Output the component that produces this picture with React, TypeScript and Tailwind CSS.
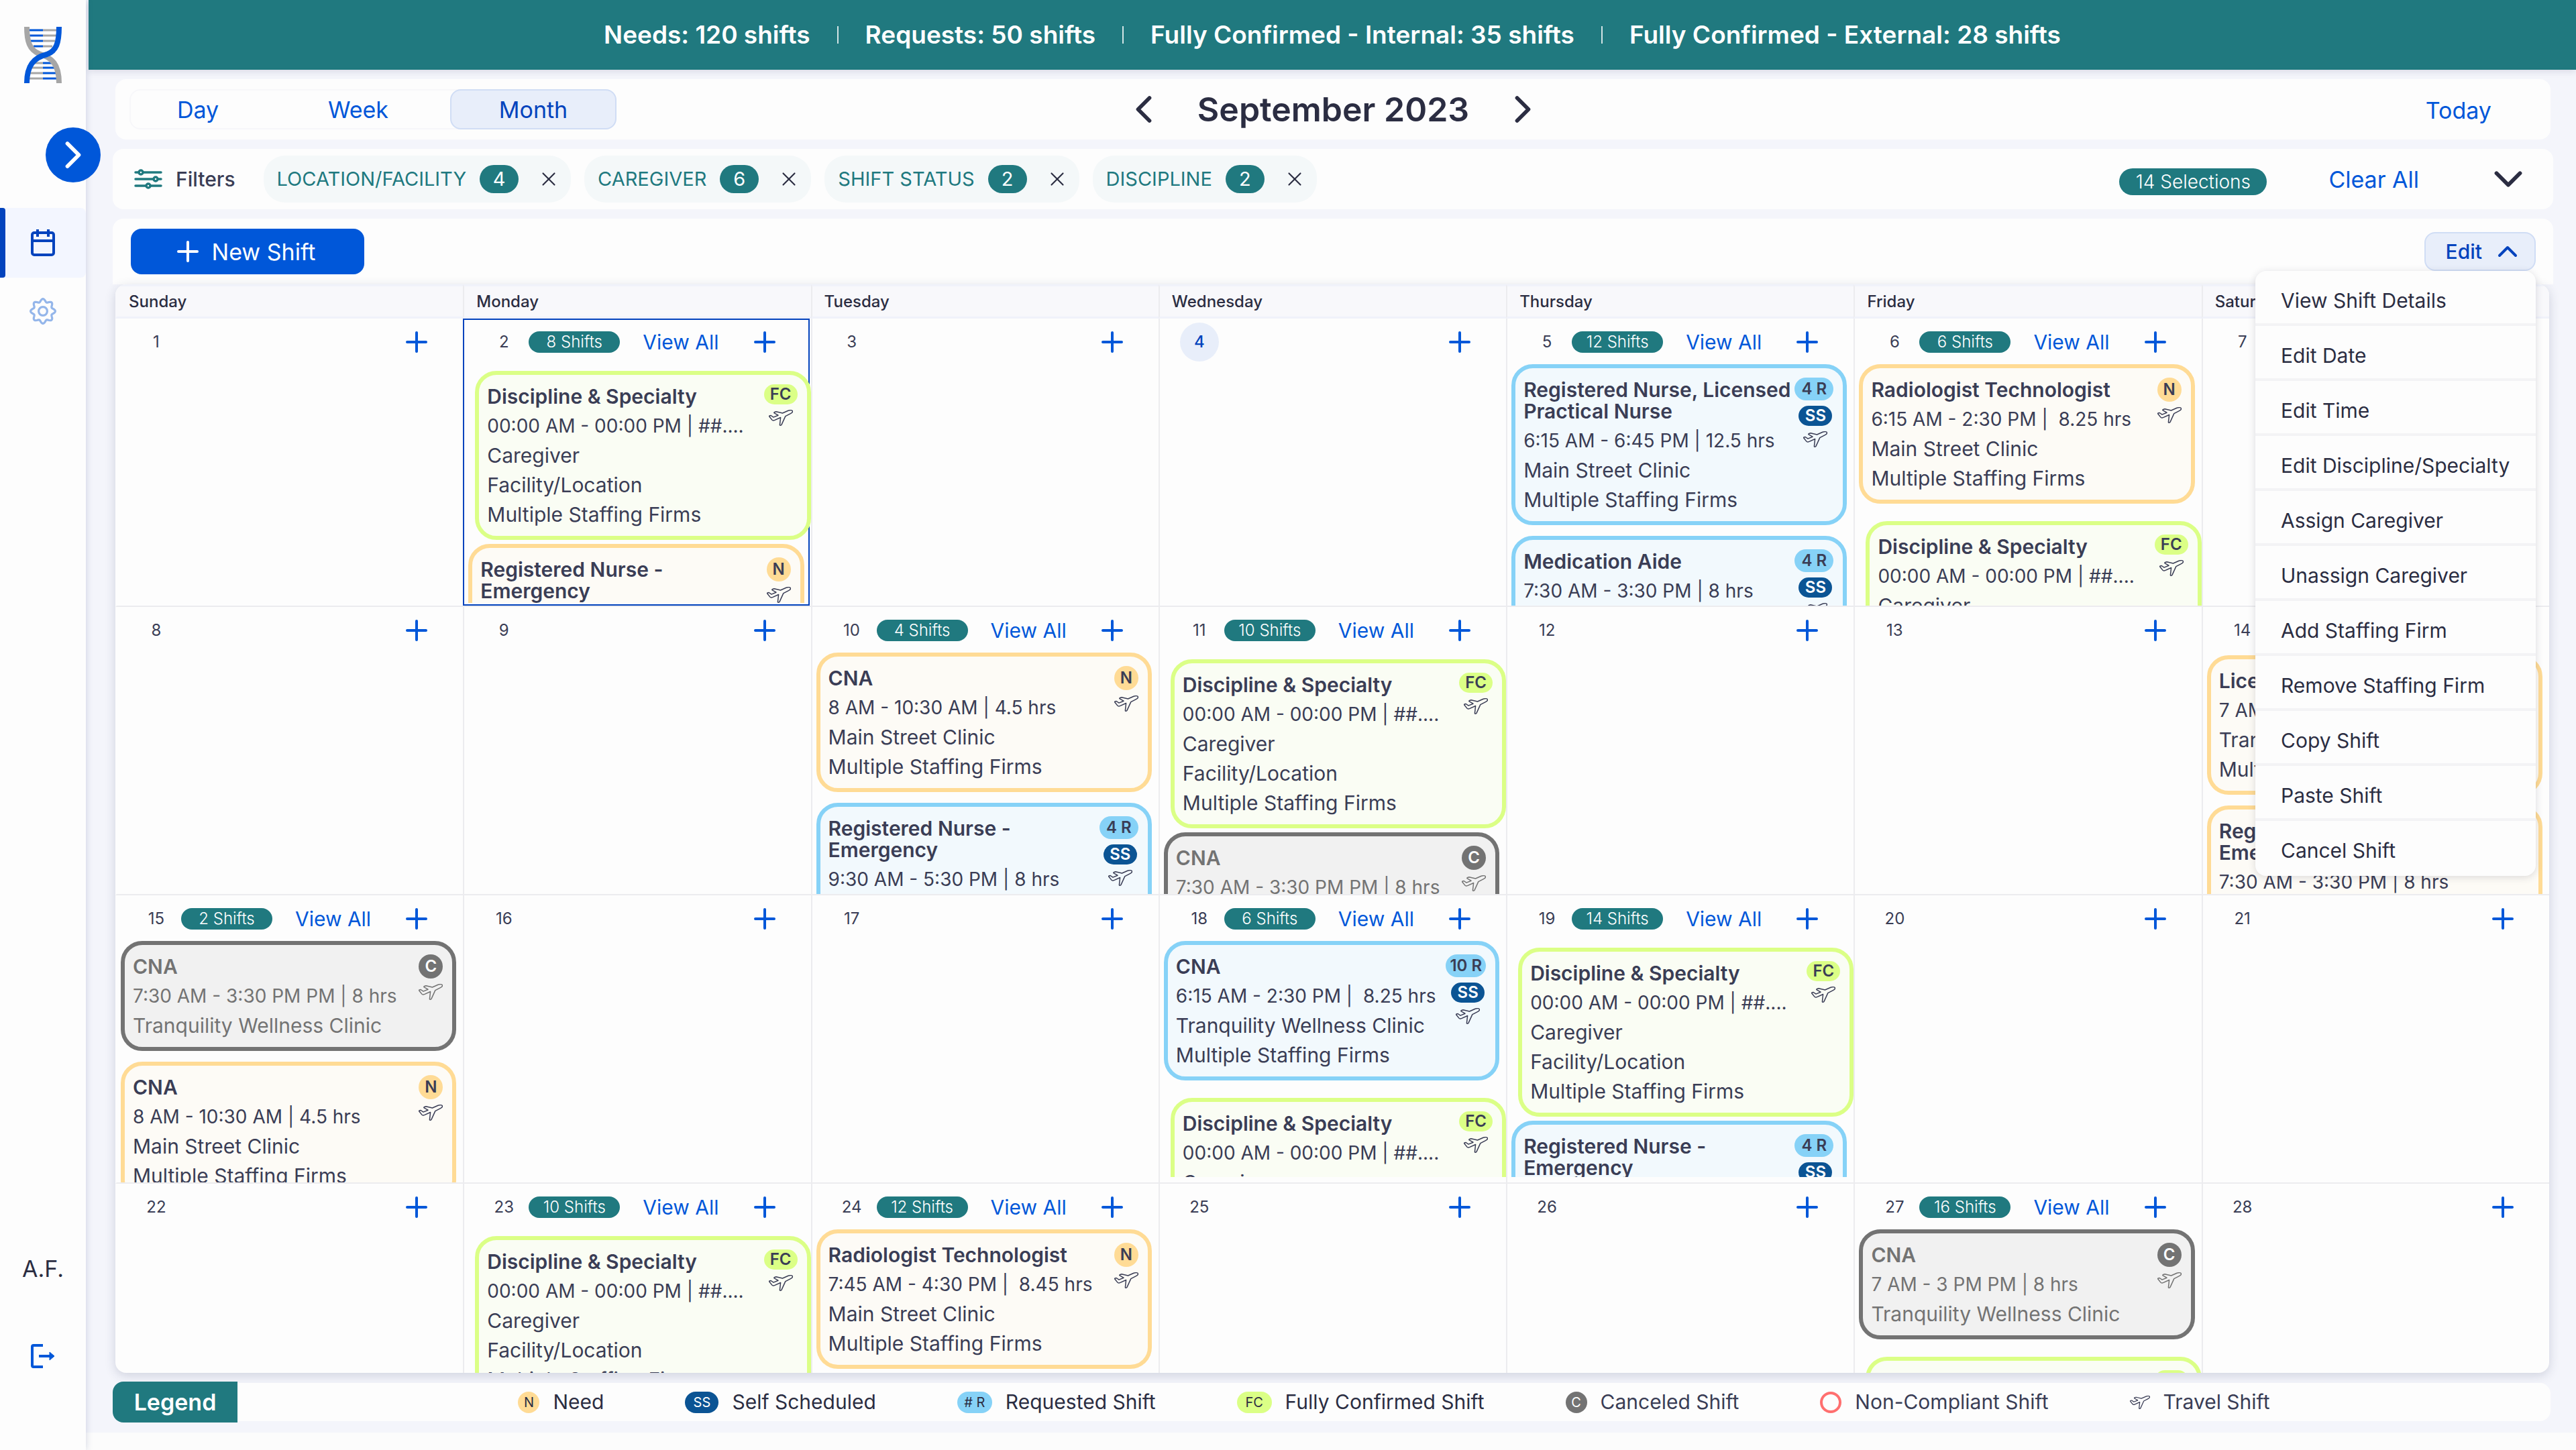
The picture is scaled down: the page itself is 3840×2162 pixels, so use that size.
import { ChevronDown, ChevronLeft, ChevronRight, ChevronUp, Plus, X } from "lucide-react";
import clsx from "clsx";

type ShiftStatus = "need" | "requested" | "confirmed" | "canceled";

interface Shift {
	status: ShiftStatus;
	title: string[];
	time: string;
	lines: string[];
	requests?: number;
}

interface Day {
	date: number;
	count?: number;
	selected?: boolean;
	today?: boolean;
	listStyles?: string;
	shifts?: Shift[];
}

const WEEKDAYS = ["Sunday", "Monday", "Tuesday", "Wednesday", "Thursday", "Friday", "Saturday"];

const FILTERS = [
	{ label: "LOCATION/FACILITY", count: 4 },
	{ label: "CAREGIVER", count: 6 },
	{ label: "SHIFT STATUS", count: 2 },
	{ label: "DISCIPLINE", count: 2 },
];

const MENU = [
	"View Shift Details",
	"Edit Date",
	"Edit Time",
	"Edit Discipline/Specialty",
	"Assign Caregiver",
	"Unassign Caregiver",
	"Add Staffing Firm",
	"Remove Staffing Firm",
	"Copy Shift",
	"Paste Shift",
	"Cancel Shift",
];

const TOTALS = [
	"Needs: 120 shifts",
	"Requests: 50 shifts",
	"Fully Confirmed - Internal: 35 shifts",
	"Fully Confirmed - External: 28 shifts",
];

const FIRMS = "Multiple Staffing Firms";
const MAIN_STREET = "Main Street Clinic";
const TRANQUILITY = "Tranquility Wellness Clinic";

const confirmed: Shift = {
	status: "confirmed",
	title: ["Discipline & Specialty"],
	time: "00:00 AM - 00:00 PM | ##....",
	lines: ["Caregiver", "Facility/Location", FIRMS],
};

const WEEKS: Day[][] = [
	[
		{ date: 1 },
		{
			date: 2,
			count: 8,
			selected: true,
			listStyles: "mb-1",
			shifts: [
				confirmed,
				{
					status: "need",
					title: ["Registered Nurse -", "Emergency"],
					time: "7:30 AM - 3:30 PM | 8 hrs",
					lines: [MAIN_STREET, FIRMS],
				},
			],
		},
		{ date: 3 },
		{ date: 4, today: true },
		{
			date: 5,
			count: 12,
			shifts: [
				{
					status: "requested",
					requests: 4,
					title: ["Registered Nurse, Licensed", "Practical Nurse"],
					time: "6:15 AM - 6:45 PM | 12.5 hrs",
					lines: [MAIN_STREET, FIRMS],
				},
				{
					status: "requested",
					requests: 4,
					title: ["Medication Aide"],
					time: "7:30 AM - 3:30 PM | 8 hrs",
					lines: [MAIN_STREET, FIRMS],
				},
			],
		},
		{
			date: 6,
			count: 6,
			shifts: [
				{
					status: "need",
					title: ["Radiologist Technologist"],
					time: "6:15 AM - 2:30 PM |  8.25 hrs",
					lines: [MAIN_STREET, FIRMS],
				},
				confirmed,
			],
		},
		{ date: 7 },
	],
	[
		{ date: 8 },
		{ date: 9 },
		{
			date: 10,
			count: 4,
			shifts: [
				{
					status: "need",
					title: ["CNA"],
					time: "8 AM - 10:30 AM | 4.5 hrs",
					lines: [MAIN_STREET, FIRMS],
				},
				{
					status: "requested",
					requests: 4,
					title: ["Registered Nurse -", "Emergency"],
					time: "9:30 AM - 5:30 PM | 8 hrs",
					lines: [MAIN_STREET, FIRMS],
				},
			],
		},
		{
			date: 11,
			count: 10,
			shifts: [
				confirmed,
				{
					status: "canceled",
					title: ["CNA"],
					time: "7:30 AM - 3:30 PM PM | 8 hrs",
					lines: [TRANQUILITY],
				},
			],
		},
		{ date: 12 },
		{ date: 13 },
		{
			date: 14,
			listStyles: "mt-1",
			shifts: [
				{
					status: "need",
					title: ["Licensed Practical Nurse"],
					time: "7 AM - 3 PM | 8 hrs",
					lines: [TRANQUILITY, FIRMS],
				},
				{
					status: "need",
					title: ["Registered Nurse -", "Emergency"],
					time: "7:30 AM - 3:30 PM | 8 hrs",
					lines: [MAIN_STREET, FIRMS],
				},
			],
		},
	],
	[
		{
			date: 15,
			count: 2,
			shifts: [
				{
					status: "canceled",
					title: ["CNA"],
					time: "7:30 AM - 3:30 PM PM | 8 hrs",
					lines: [TRANQUILITY],
				},
				{
					status: "need",
					title: ["CNA"],
					time: "8 AM - 10:30 AM | 4.5 hrs",
					lines: [MAIN_STREET, FIRMS],
				},
			],
		},
		{ date: 16 },
		{ date: 17 },
		{
			date: 18,
			count: 6,
			listStyles: "mb-2",
			shifts: [
				{
					status: "requested",
					requests: 10,
					title: ["CNA"],
					time: "6:15 AM - 2:30 PM |  8.25 hrs",
					lines: [TRANQUILITY, FIRMS],
				},
				confirmed,
			],
		},
		{
			date: 19,
			count: 14,
			listStyles: "mb-2",
			shifts: [
				confirmed,
				{
					status: "requested",
					requests: 4,
					title: ["Registered Nurse -", "Emergency"],
					time: "9:30 AM - 5:30 PM | 8 hrs",
					lines: [MAIN_STREET, FIRMS],
				},
			],
		},
		{ date: 20 },
		{ date: 21 },
	],
	[
		{ date: 22 },
		{ date: 23, count: 10, shifts: [confirmed] },
		{
			date: 24,
			count: 12,
			shifts: [
				{
					status: "need",
					title: ["Radiologist Technologist"],
					time: "7:45 AM - 4:30 PM |  8.45 hrs",
					lines: [MAIN_STREET, FIRMS],
				},
			],
		},
		{ date: 25 },
		{ date: 26 },
		{
			date: 27,
			count: 16,
			shifts: [
				{
					status: "canceled",
					title: ["CNA"],
					time: "7 AM - 3 PM PM | 8 hrs",
					lines: [TRANQUILITY],
				},
				confirmed,
			],
		},
		{ date: 28 },
	],
];

const CARD_STYLES: Record<ShiftStatus, string> = {
	need: "border-[#ffdb95] bg-[#fdfbf6] text-[#3a3d55]",
	requested: "border-[#86d2f7] bg-[#f2f9fd] text-[#3a3d55]",
	// confirmed cards sit a step to the right and below the others
	confirmed: "mt-[10px] -mb-[10px] ml-[10px] -mr-[10px] border-[#dbff86] bg-[#fafdf4] text-[#3a3d55]",
	canceled: "border-[#737373] bg-[#f1f1f1] text-[#737373]",
};

const PlaneIcon: React.FC<{ className: string }> = ({ className }) => (
	<svg viewBox="0 0 36 24" fill="none" stroke="currentColor" className={className} aria-hidden="true">
		<path
			d="M20.5 5 29 1.3C31.5.4 34.6.5 35.3 1.6c.6 1.2-.8 3-2.8 4L24.8 9.6 19 22.4c-.5.9-2.8 1.2-2.6.3l1.2-11.2L9 15.4c-1.7.7-3.4.6-4.1-.3L.8 10c-.4-.7.1-1.2.9-1.3l1.5-.2L7 11.1l7-2.9-5.8-3.4c-.8-.6-.2-1 .5-1.3l2.3-.8z"
			strokeWidth="1.5"
			strokeLinejoin="round"
		/>
	</svg>
);

const Logo = () => (
	<svg viewBox="0 0 56 84" fill="none" className="h-[84px] w-14" role="img" aria-label="Logo">
		<g strokeWidth="3">
			<path d="M8 5h20M8 13h20M10 21h18M14 29h14M28 54h14M28 61h17M28 69h19M28 77h20" stroke="#0057d9" />
			<path d="M28 5h20M28 13h20M28 21h18M28 29h14M14 54h14M11 61h17M9 69h19M8 77h20" stroke="#a6a6a6" />
		</g>
		<path d="M4 0c0 22 4 34 18 40 20 6 30 16 30 44" stroke="#a6a6a6" strokeWidth="8" />
		<path d="M52 0c0 24-4 36-18 41C14 46 4 58 4 84" stroke="#0057d9" strokeWidth="8" />
	</svg>
);

const CalendarIcon = () => (
	<svg viewBox="0 0 36 40" fill="none" stroke="currentColor" strokeWidth="4" className="h-10 w-9" aria-hidden="true">
		<rect x="2" y="5" width="32" height="33" rx="3" />
		<path d="M2 17h32M10 0v11M26 0v11" />
	</svg>
);

// eight soft teeth around the hub
const GEAR_POINTS = Array.from({ length: 96 }, (_, i) => {
	const angle = (i / 96) * Math.PI * 2;
	const radius = 16.2 + 2.2 * Math.cos(8 * angle);
	return `${(20 + radius * Math.cos(angle)).toFixed(2)},${(20 + radius * Math.sin(angle)).toFixed(2)}`;
}).join(" ");

const GearIcon = () => (
	<svg viewBox="0 0 40 40" fill="none" stroke="currentColor" strokeWidth="3.2" className="size-10" aria-hidden="true">
		<polygon points={GEAR_POINTS} strokeLinejoin="round" />
		<circle cx="20" cy="20" r="6.4" />
	</svg>
);

const LogoutIcon = () => (
	<svg viewBox="0 0 36 36" fill="none" stroke="currentColor" strokeWidth="4" className="size-9" aria-hidden="true">
		<path d="M18 2H4a2 2 0 0 0-2 2v28a2 2 0 0 0 2 2h14M12 18h18" />
		<path d="M28 12v12l7-6z" fill="currentColor" strokeWidth="1" />
	</svg>
);

const SlidersIcon = () => (
	<svg
		viewBox="0 0 42 30"
		fill="none"
		stroke="currentColor"
		strokeWidth="3.5"
		strokeLinecap="round"
		className="h-[30px] w-[42px] text-[#20797f]"
		aria-hidden="true"
	>
		<path d="M2 5h4M14 5h26M2 15h26M36 15h4M2 25h15M25 25h15" />
		<circle cx="10" cy="5" r="3" />
		<circle cx="32" cy="15" r="3" />
		<circle cx="21" cy="25" r="3" />
	</svg>
);

const StatusBadges: React.FC<{ shift: Shift }> = ({ shift }) => {
	const { status, requests } = shift;
	return (
		<div className="absolute top-3.5 right-3.5 flex flex-col items-end gap-2 text-2xl leading-none font-semibold">
			{status === "requested" && (
				<span className="flex h-[34px] min-w-[58px] items-center justify-center rounded-full bg-[#86d2f7] px-1.5 whitespace-nowrap">
					{requests} R
				</span>
			)}
			<div className={clsx("flex flex-col items-center gap-2", status === "requested" && "mr-0.5")}>
				{status === "requested" && (
					<span className="flex h-[30px] w-[50px] items-center justify-center rounded-full bg-[#0b5494] text-white">
						SS
					</span>
				)}
				{status === "confirmed" && (
					<span className="flex h-[30px] w-[50px] items-center justify-center rounded-full bg-[#dbff86]">
						FC
					</span>
				)}
				{status === "need" && (
					<span className="flex size-9 items-center justify-center rounded-full bg-[#ffdb95]">N</span>
				)}
				{status === "canceled" && (
					<span className="flex size-9 items-center justify-center rounded-full bg-[#737373] text-white">
						C
					</span>
				)}
				<PlaneIcon className="h-6 w-9" />
			</div>
		</div>
	);
};

const ShiftCard: React.FC<{ shift: Shift }> = ({ shift }) => (
	<article
		className={clsx(
			"relative flex shrink-0 flex-col gap-3 rounded-[32px] border-6 py-4 pl-3 text-[30px] leading-8 whitespace-pre",
			CARD_STYLES[shift.status]
		)}
	>
		<h3 className="font-semibold">
			{shift.title.map((line) => (
				<span key={line} className="block">
					{line}
				</span>
			))}
		</h3>
		<p className="text-[28px] leading-8">{shift.time}</p>
		{shift.lines.map((line) => (
			<p key={line}>{line}</p>
		))}
		<StatusBadges shift={shift} />
	</article>
);

const DayCell: React.FC<{ day: Day; last: boolean }> = ({ day, last }) => (
	<td
		className={clsx(
			"relative border-l-2 border-[#ececef] p-0 align-top first:border-l-transparent",
			!last && "border-b-2"
		)}
	>
		{day.selected && <div className="absolute inset-0 -left-0.5 mr-0.5 border-2 border-[#0343bd]" />}
		<div className={clsx("relative flex flex-col", last ? "h-[282px]" : "h-[428px]")}>
			<div className="flex h-[68px] shrink-0 items-center pt-0.5 pl-[30px]">
				<span
					className={clsx(
						"flex size-[58px] items-center justify-center rounded-full text-2xl",
						day.today ? "bg-[#e8eefa] font-medium text-[#0343bd]" : "text-[#3a3d55]"
					)}
				>
					{day.date}
				</span>
				{day.count && (
					<>
						<span className="ml-2 flex h-8 w-[136px] items-center justify-center rounded-full bg-[#20797f] text-2xl font-light text-white">
							{day.count} Shifts
						</span>
						<a href="#" className="ml-[34px] text-[30px] whitespace-nowrap text-[#0057d9]">
							View All
						</a>
					</>
				)}
				<button type="button" aria-label="Add shift" className="mr-[45px] ml-auto text-[#0057d9]">
					<Plus className="size-12" strokeWidth={2} />
				</button>
			</div>
			{day.shifts && (
				<div
					className={clsx(
						"flex min-h-0 flex-1 flex-col gap-4 overflow-hidden pr-2.5 pl-1.5",
						day.listStyles
					)}
				>
					{day.shifts.map((shift, i) => (
						<ShiftCard key={i} shift={shift} />
					))}
				</div>
			)}
		</div>
	</td>
);

const Sidebar = () => (
	<aside className="relative z-10 flex w-32 shrink-0 flex-col items-center bg-[#fdfdfd] pt-10 shadow-[0_0_10px_rgba(40,60,120,0.2)]">
		<Logo />
		<button
			type="button"
			aria-label="Expand menu"
			className="absolute top-[190px] left-[68px] flex size-[82px] items-center justify-center rounded-full bg-[#0057d9] text-white"
		>
			<ChevronRight className="size-[68px]" strokeWidth={2} />
		</button>
		<nav className="mt-[186px] flex w-full flex-col">
			<a
				href="#"
				aria-label="Calendar"
				className="relative flex h-[104px] items-center justify-center rounded-r-lg bg-[#f3f6ff] text-[#0343bd]"
			>
				<span className="absolute inset-y-0 left-0 w-2 rounded-r bg-[#0343bd]" />
				<CalendarIcon />
			</a>
			<a href="#" aria-label="Settings" className="flex h-[100px] items-center justify-center text-[#94b6ea]">
				<GearIcon />
			</a>
		</nav>
		<div className="mt-auto flex flex-col items-center gap-[92px] pb-[122px]">
			<span className="text-[34px] leading-10 text-[#2b2d42]">A.F.</span>
			<button type="button" aria-label="Log out" className="text-[#0057d9]">
				<LogoutIcon />
			</button>
		</div>
	</aside>
);

const ViewBar = () => (
	<section className="mx-1 grid h-[90px] grid-cols-3 items-center rounded-2xl bg-[#fdfdfd] pr-[88px] pl-[21px] text-[34px]">
		<div className="flex h-[60px] w-fit rounded-2xl border-2 border-[#f7f7fa] text-[#0057d9]">
			<button type="button" className="w-[200px]">
				Day
			</button>
			<button type="button" className="w-[278px]">
				Week
			</button>
			<button
				type="button"
				className="-m-0.5 w-[248px] rounded-2xl border-2 border-[#d0ddf5] bg-[#e8eefa] text-[#0343bd]"
			>
				Month
			</button>
		</div>
		<div className="flex items-center justify-center gap-[46px] pl-[68px] whitespace-nowrap text-[#2b2d42]">
			<button type="button" aria-label="Previous month">
				<ChevronLeft className="size-[68px]" strokeWidth={2} />
			</button>
			<h1 className="text-[50px] font-semibold">September 2023</h1>
			<button type="button" aria-label="Next month">
				<ChevronRight className="size-[68px]" strokeWidth={2} />
			</button>
		</div>
		<a href="#" className="justify-self-end pt-0.5 text-[#0057d9]">
			Today
		</a>
	</section>
);

const FilterBar = () => (
	<section className="flex h-[90px] items-center rounded-2xl bg-[#fdfdfd] pr-8 pl-8">
		<SlidersIcon />
		<h2 className="mr-[42px] ml-5 text-[30px] font-medium text-[#3a3d55]">Filters</h2>
		<ul className="flex gap-5">
			{FILTERS.map((filter) => (
				<li
					key={filter.label}
					className="flex h-[70px] items-center rounded-[32px] bg-[#f4f8f9] pr-4 pl-5 text-[29px] text-[#20797f]"
				>
					{filter.label}
					<span className="ml-5 flex h-[42px] w-[58px] items-center justify-center rounded-full bg-[#20797f] text-white">
						{filter.count}
					</span>
					<button type="button" aria-label={`Remove ${filter.label}`} className="ml-7 text-[#2b2d42]">
						<X className="size-[34px]" strokeWidth={1.5} />
					</button>
				</li>
			))}
		</ul>
		<span className="mt-2 ml-auto flex h-10 w-[220px] items-center justify-center rounded-full bg-[#20797f] text-[28px] font-light whitespace-nowrap text-white">
			14 Selections
		</span>
		<button type="button" className="ml-[92px] text-[34px] whitespace-nowrap text-[#0057d9]">
			Clear All
		</button>
		<button type="button" aria-label="Show filters" className="ml-[98px] text-[#2b2d42]">
			<ChevronDown className="size-[70px]" strokeWidth={2} />
		</button>
	</section>
);

const Toolbar = () => (
	<div className="flex h-[98px] items-center justify-between rounded-t-2xl bg-[#fdfdfd] pr-[26px] pl-[27px]">
		<button
			type="button"
			className="flex h-[68px] w-[348px] items-center justify-center gap-3 rounded-2xl bg-[#0057d9] pr-3 text-[34px] text-white"
		>
			<Plus className="size-12" strokeWidth={2} />
			New Shift
		</button>
		<div className="relative z-20">
			<button
				type="button"
				aria-haspopup="menu"
				aria-expanded="true"
				className="flex h-[58px] w-[166px] items-center justify-end gap-3.5 rounded-2xl border-2 border-[#d0ddf5] bg-[#e8eefa] pr-4 text-[30px] font-medium text-[#0343bd]"
			>
				Edit
				<ChevronUp className="size-12" strokeWidth={2} />
			</button>
			<ul
				role="menu"
				className="absolute top-full right-0 w-[418px] divide-y-4 divide-[#f3f3f5] rounded-2xl bg-[#fdfdfd] pb-1 text-[30px] text-[#2b2d42] shadow-[0_2px_12px_rgba(40,40,60,0.16)]"
			>
				{MENU.map((item) => (
					<li key={item} role="none" className="box-content h-[78px]">
						<button type="button" role="menuitem" className="h-full w-full pt-2.5 pl-[38px] text-left">
							{item}
						</button>
					</li>
				))}
			</ul>
		</div>
	</div>
);

const Calendar = () => (
	<div className="mr-1.5 ml-1 overflow-hidden rounded-2xl bg-[#fdfdfd] shadow-[0_4px_16px_rgba(40,50,90,0.18)]">
		<table className="w-full table-fixed border-separate border-spacing-0">
			<thead>
				<tr>
					{WEEKDAYS.map((name) => (
						<th
							key={name}
							scope="col"
							className="h-[51px] border-y-3 border-l-2 border-y-[#f0f2fa] border-l-[#ececef] bg-[#f8f8fb] p-0 pl-[18px] text-left text-2xl leading-8 font-medium text-[#2b2d42] first:border-l-transparent"
						>
							{name}
						</th>
					))}
				</tr>
			</thead>
			<tbody>
				{WEEKS.map((week, i) => (
					<tr key={i}>
						{week.map((day) => (
							<DayCell key={day.date} day={day} last={i === WEEKS.length - 1} />
						))}
					</tr>
				))}
			</tbody>
		</table>
	</div>
);

const Legend = () => (
	<footer className="mt-[13px] mr-1 flex h-[61px] items-center">
		<h2 className="flex h-full w-[186px] items-center justify-center rounded-l-2xl bg-[#20797f] text-[34px] font-semibold text-white">
			Legend
		</h2>
		<ul className="flex h-[57px] flex-1 items-center justify-center gap-[121px] rounded-r-2xl bg-[#fdfdfd] text-[30px] whitespace-nowrap text-[#2b2d42]">
			<li className="flex items-center gap-5">
				<span className="flex size-8 items-center justify-center rounded-full bg-[#ffdb95] text-xl">N</span>
				Need
			</li>
			<li className="flex items-center gap-5">
				<span className="flex h-8 w-[50px] items-center justify-center rounded-full bg-[#0b5494] text-xl text-white">
					SS
				</span>
				Self Scheduled
			</li>
			<li className="flex items-center gap-5">
				<span className="flex h-8 w-[52px] items-center justify-center rounded-full bg-[#86d2f7] text-xl">
					# R
				</span>
				Requested Shift
			</li>
			<li className="flex items-center gap-5">
				<span className="flex h-8 w-[52px] items-center justify-center rounded-full bg-[#dbff86] text-xl">
					FC
				</span>
				Fully Confirmed Shift
			</li>
			<li className="flex items-center gap-5 text-[#3a3d55]">
				<span className="flex size-8 items-center justify-center rounded-full bg-[#737373] text-xl text-white">
					C
				</span>
				Canceled Shift
			</li>
			<li className="flex items-center gap-5 text-[#3a3d55]">
				<span className="size-8 rounded-full border-4 border-[#ff6f6f]" />
				Non-Compliant Shift
			</li>
			<li className="flex items-center gap-5 text-[#3a3d55]">
				<PlaneIcon className="h-5 w-[30px]" />
				Travel Shift
			</li>
		</ul>
	</footer>
);

const App = () => {
	return (
		<div className="flex min-h-screen bg-[#fcfcfc] font-['Inter',sans-serif]">
			<Sidebar />
			<div className="min-w-0 flex-1">
				<div className="bg-[#f4f5fb] pb-[15px]">
					<header className="ml-1 flex h-[104px] items-center justify-center bg-[#20797f] text-[37px] font-semibold whitespace-nowrap text-white shadow-[0_2px_10px_rgba(40,50,90,0.15)]">
						{TOTALS.map((total, i) => (
							<div key={total} className="flex items-center">
								{i > 0 && <span className="mx-10 h-[26px] w-0.5 bg-white/80" />}
								{total}
							</div>
						))}
					</header>
					<main className="flex flex-col gap-3.5 pt-3.5 pr-[34px] pl-10">
						<ViewBar />
						<FilterBar />
						<section>
							<Toolbar />
							<Calendar />
							<Legend />
						</section>
					</main>
				</div>
			</div>
		</div>
	);
};

export default App;
